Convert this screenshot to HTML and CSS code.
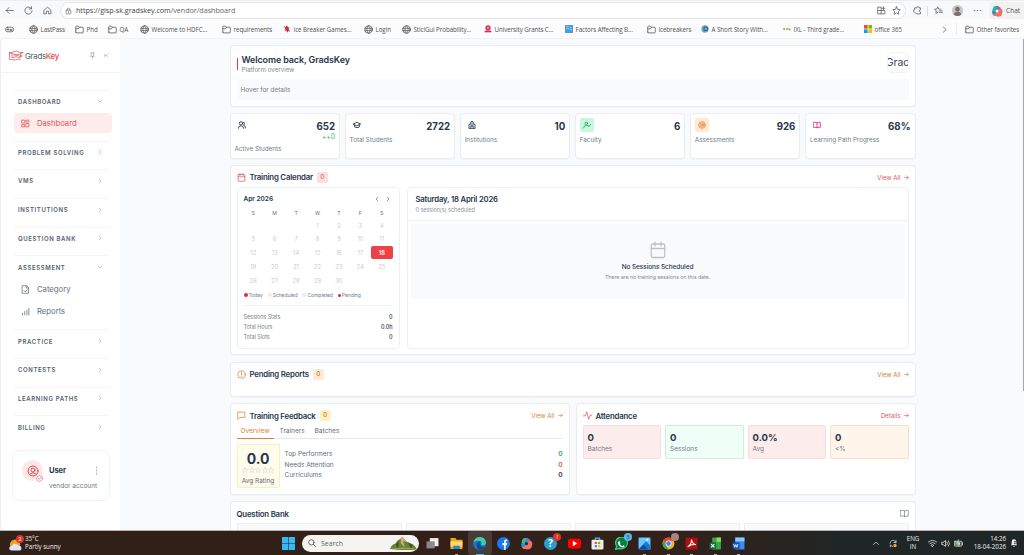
FILE: index.html
```html
<!DOCTYPE html>
<html lang="en">
<head>
  <meta charset="UTF-8">
  <meta name="viewport" content="width=device-width, initial-scale=1.0">
  <title>GradsKey Dashboard</title>
  <link rel="stylesheet" href="styles.css">
</head>
<body>
  <!-- Shared icons -->
  <svg class="sprite" width="0" height="0">
    <symbol id="i-globe" viewBox="0 0 24 24"><circle cx="12" cy="12" r="10"/><path d="M2 9h20M2 15h20M12 2c-6 6-6 14 0 20M12 2c6 6 6 14 0 20"/></symbol>
    <symbol id="i-folder" viewBox="0 0 24 24"><path d="M2 19V5q0-2 2-2h5l3 3h8q2 0 2 2v11q0 2-2 2H4q-2 0-2-2zM2 10h7l3-4"/></symbol>
    <symbol id="i-right" viewBox="0 0 24 24"><path d="m9 5 7 7-7 7"/></symbol>
    <symbol id="i-left" viewBox="0 0 24 24"><path d="m15 5-7 7 7 7"/></symbol>
    <symbol id="i-down" viewBox="0 0 24 24"><path d="m5 9 7 7 7-7"/></symbol>
    <symbol id="i-arrow" viewBox="0 0 24 24"><path d="M3 12h18M13 5l8 7-8 7"/></symbol>
    <symbol id="i-calendar" viewBox="0 0 24 24"><rect x="3" y="4" width="18" height="18" rx="2"/><path d="M8 1.5v5M16 1.5v5M3 10h18"/></symbol>
    <symbol id="i-book" viewBox="0 0 24 24"><path d="M12 6v15M2 4h7q3 0 3 3 0-3 3-3h7v15h-7q-3 0-3 2 0-2-3-2H2z"/></symbol>
    <symbol id="i-star" viewBox="0 0 24 24"><path d="m12 2 3 7 7 .7-5.200 5 1.500 7.300-6.300-3.700L5.700 22l1.500-7.300L2 9.700 9 9z"/></symbol>
  </svg>

  <div class="screen">
    <header class="toolbar">
      <svg class="ic nav-ic" viewBox="0 0 24 24"><path d="M22 12H3M11 4l-8 8 8 8"/></svg>
      <svg class="ic nav-ic" viewBox="0 0 24 24"><path d="M20 7a9.5 9.5 0 1 0 1.5 6M20 2v6h-6"/></svg>
      <svg class="ic nav-ic" viewBox="0 0 24 24"><path d="M3 11l9-8 9 8v10h-6v-7H9v7H3z"/></svg>
      <div class="address">
        <svg class="ic lock" viewBox="0 0 24 24"><rect x="4" y="9" width="16" height="13" rx="2"/><path d="M8 9V6a4 4 0 0 1 8 0v3M12 14v3"/></svg>
        <span class="url">https://gisp-sk.gradskey.com<i>/vendor/dashboard</i></span>
        <svg class="ic" viewBox="0 0 24 24"><path d="M3 3h8v18H3zM3 12h18v9H11M17 2v8M13 6h8"/></svg>
        <svg class="ic star"><use href="#i-star"/></svg>
      </div>
      <div class="tools">
        <svg class="ic" viewBox="0 0 24 24"><path d="M5 5h5a3 3 0 0 1 6 0h4v5a3 3 0 0 0 0 6v5H9l-5-5a3 3 0 0 1 0-6z"/></svg>
        <span class="vline"></span>
        <svg class="ic" viewBox="0 0 24 24"><path d="m10 3 2.500 5 6 .6M10 3 7.500 8l-6 .6 4.500 4.500L5 20l5-3M14 13h8M14 17h8"/></svg>
        <svg class="avatar" viewBox="0 0 24 24"><circle cx="12" cy="12" r="12" fill="#c9c7c6"/><circle cx="12" cy="9" r="5" fill="#77716f"/><path d="M3 20q3-6 9-6t9 6q-9 8-18 0" fill="#77716f"/></svg>
        <svg class="ic dots" viewBox="0 0 24 24"><path d="M3 12h2M11 12h2M19 12h2"/></svg>
        <div class="chat">
          <svg class="copilot" viewBox="0 0 24 24"><path d="M8 2h7l3 7-5 3-2 8H7q-5 0-5-7z" fill="#1b91e8"/><path d="M3 10q1-8 6-8h3L8 13z" fill="#35bd84"/><path d="M13 4h4q2 0 3 4 3 0 3 5l-2 7q-1 3-6 3h-4z" fill="#a05ae5"/><path d="M11 22H7q-3 0-4-4 6 2 8-4l3-6h6q3 2 2 7-2 7-7 7z" fill="#f4744b"/><circle cx="12" cy="12" r="3" fill="#fff"/></svg>
          <span>Chat</span>
        </div>
      </div>
    </header>

    <nav class="favorites">
      <svg class="ic pad" viewBox="0 0 24 16"><rect x="1" y="2" width="22" height="12" rx="6"/><path d="M5 8h6M14 8h5M8 6v4M14 11h4"/></svg>
      <a class="fav"><svg class="ic"><use href="#i-globe"/></svg>LastPass</a>
      <a class="fav"><svg class="ic"><use href="#i-folder"/></svg>Phd</a>
      <a class="fav"><svg class="ic"><use href="#i-folder"/></svg>QA</a>
      <a class="fav"><svg class="ic"><use href="#i-globe"/></svg>Welcome to HDFC...</a>
      <a class="fav"><svg class="ic"><use href="#i-folder"/></svg>requirements</a>
      <a class="fav"><svg class="fill-ic" viewBox="0 0 24 24"><path d="M3 3l5 3 4-5 3 6 5 1-3 4 5 9-6-4-2 6-5-7-4 4 2-8z" fill="#d92b3d"/></svg>Ice Breaker Games...</a>
      <a class="fav"><svg class="ic"><use href="#i-globe"/></svg>Login</a>
      <a class="fav"><svg class="ic"><use href="#i-globe"/></svg>SticiGui Probability...</a>
      <a class="fav"><svg class="fill-ic" viewBox="0 0 24 24"><circle cx="12" cy="9" r="8" fill="#d83b62"/><path d="M2 17h20v5H2z" fill="#bd355a"/><circle cx="12" cy="8" r="3" fill="#f6a2b2"/></svg>University Grants C...</a>
      <a class="fav"><svg class="fill-ic" viewBox="0 0 24 24"><path d="M0 0h24v24H0z" fill="#4d9cd8"/><path d="M4 5h7M4 11h9M15 7h6M15 14h6" stroke="#c6e5fa" stroke-width="2"/></svg>Factors Affecting B...</a>
      <a class="fav"><svg class="ic"><use href="#i-folder"/></svg>icebreakers</a>
      <a class="fav"><svg class="fill-ic" viewBox="0 0 24 24"><circle cx="12" cy="12" r="11" fill="#77a9c9"/><path d="M9 6h6a5 5 0 0 1 0 11H9z" fill="none" stroke="#1e5f88" stroke-width="3"/></svg>A Short Story With...</a>
      <a class="fav"><svg class="fill-ic" viewBox="0 0 24 24"><path d="M1 10h5v5H1z" fill="#66b344"/><path d="M9 9l6 6m0-6-6 6" stroke="#f4b400" stroke-width="3"/><path d="M18 9v5h5" fill="none" stroke="#3aa0d9" stroke-width="3"/></svg>IXL - Third grade...</a>
      <a class="fav"><svg class="fill-ic" viewBox="0 0 24 24"><path d="M0 0h11v11H0z" fill="#f25022"/><path d="M13 0h11v11H13z" fill="#7fba00"/><path d="M0 13h11v11H0z" fill="#00a4ef"/><path d="M13 13h11v11H13z" fill="#ffb900"/></svg>office 365</a>
      <svg class="ic more"><use href="#i-right"/></svg>
      <a class="fav other"><svg class="ic"><use href="#i-folder"/></svg>Other favorites</a>
    </nav>

    <div class="app">
      <aside class="sidebar">
        <div class="brand">
          <svg class="logo" viewBox="0 0 45 30"><path d="M3 7Q14 7 23 2q9 5 20 5-10 3-20 7Q13 9 3 7zM11 11v10q12-5 23 0V11M4 8v16M2 25q9 3 20 2 6-3 14-1M34 14q5-2 6 2-3 4-7 2M15 14q8-2 15 1"/></svg>
          <span class="brand-name">Grads<b>Key</b></span>
          <svg class="ic pin" viewBox="0 0 24 24"><path d="M7 3h10M8 3v9l-3 3h14l-3-3V3M12 15v7"/></svg>
          <svg class="ic collapse" viewBox="0 0 24 24"><path d="M4 4v16M20 4l-8 8 8 8M4 12h8"/></svg>
        </div>

        <div class="menu">
          <section class="group open">
            <h4>Dashboard <svg class="ic"><use href="#i-down"/></svg></h4>
            <a class="item active"><svg class="ic" viewBox="0 0 24 24"><path d="M3 3h7v8H3zM14 3h7v5h-7zM14 12h7v9h-7zM3 15h7v6H3z"/></svg>Dashboard</a>
          </section>
          <section class="group"><h4>Problem Solving <svg class="ic"><use href="#i-right"/></svg></h4></section>
          <section class="group"><h4>VMS <svg class="ic"><use href="#i-right"/></svg></h4></section>
          <section class="group"><h4>Institutions <svg class="ic"><use href="#i-right"/></svg></h4></section>
          <section class="group"><h4>Question Bank <svg class="ic"><use href="#i-right"/></svg></h4></section>
          <section class="group assessment">
            <h4>Assessment <svg class="ic"><use href="#i-down"/></svg></h4>
            <a class="item"><svg class="ic" viewBox="0 0 24 24"><path d="M4 2h11l5 5v15H4zM14 2v6h6M8 15l3 3 6-5"/></svg>Category</a>
            <a class="item"><svg class="ic" viewBox="0 0 24 24"><path d="M4 17v4M10 12v9M16 8v13M21 3v18"/></svg>Reports</a>
          </section>
          <section class="group"><h4>Practice <svg class="ic"><use href="#i-right"/></svg></h4></section>
          <section class="group"><h4>Contests <svg class="ic"><use href="#i-right"/></svg></h4></section>
          <section class="group"><h4>Learning Paths <svg class="ic"><use href="#i-right"/></svg></h4></section>
          <section class="group"><h4>Billing <svg class="ic"><use href="#i-right"/></svg></h4></section>
        </div>

        <div class="user-card">
          <div class="user-icon">
            <svg class="ic" viewBox="0 0 24 24"><circle cx="12" cy="12" r="10"/><circle cx="12" cy="10" r="4"/><path d="M5 19q7-7 14 0"/></svg>
            <svg class="ic status" viewBox="0 0 24 24"><circle cx="12" cy="12" r="10"/><path d="m8 12 3 3 5-6"/></svg>
          </div>
          <div class="user-text">
            <strong>User</strong>
            <span>vendor account</span>
          </div>
          <svg class="ic kebab" viewBox="0 0 24 24"><path d="M12 3v2M12 11v2M12 19v2"/></svg>
        </div>
      </aside>

      <main class="content">
        <section class="card welcome">
          <div class="welcome-head">
            <div class="welcome-title">
              <h1>Welcome back, GradsKey</h1>
              <p>Platform overview</p>
            </div>
            <div class="org-logo"><span>Grac</span></div>
          </div>
          <div class="hover-box">Hover for details</div>
        </section>

        <section class="stats">
          <div class="card stat first">
            <svg class="ic" viewBox="0 0 24 24"><circle cx="9" cy="7" r="5"/><path d="M1 22q0-8 8-8 7 0 8 8M16 3q5 1 3 7l-3 2q6 1 7 9"/></svg>
            <strong>652</strong><em>++0</em><span class="label">Active Students</span>
          </div>
          <div class="card stat">
            <svg class="ic" viewBox="0 0 24 24"><path d="m1 9 11-5 11 5-11 5zM5 12v6q7 4 14 0v-6"/></svg>
            <strong>2722</strong><span class="label">Total Students</span>
          </div>
          <div class="card stat">
            <svg class="ic" viewBox="0 0 24 24"><path d="M3 22V10h4V4l5-3 5 3v6h4v12zM8 22v-5h8v5M12 5v5M9 13h6"/></svg>
            <strong>10</strong><span class="label">Institutions</span>
          </div>
          <div class="card stat green">
            <svg class="ic" viewBox="0 0 24 24"><circle cx="10" cy="7" r="4"/><path d="M2 21q0-8 8-8 4 0 6 3M15 13l3 3 5-6"/></svg>
            <strong>6</strong><span class="label">Faculty</span>
          </div>
          <div class="card stat orange">
            <svg class="ic" viewBox="0 0 24 24"><circle cx="12" cy="12" r="10"/><circle cx="12" cy="12" r="6"/><circle cx="12" cy="12" r="2"/></svg>
            <strong>926</strong><span class="label">Assessments</span>
          </div>
          <div class="card stat pink">
            <svg class="ic"><use href="#i-book"/></svg>
            <strong>68%</strong><span class="label">Learning Path Progress</span>
          </div>
        </section>

        <section class="card training">
          <div class="card-head red">
            <svg class="ic"><use href="#i-calendar"/></svg>
            <h2>Training Calendar</h2><span class="badge">0</span>
            <a>View All <svg class="ic"><use href="#i-arrow"/></svg></a>
          </div>
          <div class="panels">
            <div class="panel month">
              <div class="month-head">
                <span>Apr 2026</span>
                <svg class="ic"><use href="#i-left"/></svg>
                <svg class="ic"><use href="#i-right"/></svg>
              </div>
              <div class="weekdays"><span>S</span><span>M</span><span>T</span><span>W</span><span>T</span><span>F</span><span>S</span></div>
              <div class="days" id="days"></div>
              <div class="legend">
                <span class="today">Today</span><span class="scheduled">Scheduled</span><span class="completed">Completed</span><span class="pending">Pending</span>
              </div>
              <dl class="totals">
                <div><dt>Sessions Stats</dt><dd>0</dd></div>
                <div><dt>Total Hours</dt><dd>0.0h</dd></div>
                <div><dt>Total Slots</dt><dd>0</dd></div>
              </dl>
            </div>
            <div class="panel schedule">
              <div class="schedule-head">
                <h3>Saturday, 18 April 2026</h3>
                <p>0 session(s) scheduled</p>
              </div>
              <div class="empty">
                <svg class="ic"><use href="#i-calendar"/></svg>
                <strong>No Sessions Scheduled</strong>
                <span>There are no training sessions on this date.</span>
              </div>
            </div>
          </div>
        </section>

        <section class="card reports">
          <div class="card-head orange">
            <svg class="ic" viewBox="0 0 24 24"><circle cx="12" cy="12" r="10"/><path d="M12 6v7M12 16v1"/></svg>
            <h2>Pending Reports</h2><span class="badge">0</span>
            <a>View All <svg class="ic"><use href="#i-arrow"/></svg></a>
          </div>
        </section>

        <div class="two-col">
          <section class="card feedback">
            <div class="card-head amber">
              <svg class="ic" viewBox="0 0 24 24"><path d="M3 3h18v14H8l-5 5z"/></svg>
              <h2>Training Feedback</h2><span class="badge">0</span>
              <a>View All <svg class="ic"><use href="#i-arrow"/></svg></a>
            </div>
            <div class="tabs"><span class="selected">Overview</span><span>Trainers</span><span>Batches</span></div>
            <div class="feedback-body">
              <div class="rating">
                <strong>0.0</strong>
                <div class="stars">
                  <svg class="ic"><use href="#i-star"/></svg>
                  <svg class="ic"><use href="#i-star"/></svg>
                  <svg class="ic"><use href="#i-star"/></svg>
                  <svg class="ic"><use href="#i-star"/></svg>
                  <svg class="ic"><use href="#i-star"/></svg>
                </div>
                <span class="avg">Avg Rating</span>
              </div>
              <dl class="scores">
                <div><dt>Top Performers</dt><dd class="good">0</dd></div>
                <div><dt>Needs Attention</dt><dd class="bad">0</dd></div>
                <div><dt>Curriculums</dt><dd>0</dd></div>
              </dl>
            </div>
          </section>

          <section class="card attendance">
            <div class="card-head red">
              <svg class="ic" viewBox="0 0 24 24"><path d="M1 13h5L10 2l5 20 4-11h4"/></svg>
              <h2>Attendance</h2>
              <a>Details <svg class="ic"><use href="#i-arrow"/></svg></a>
            </div>
            <div class="tiles">
              <div class="tile rose"><strong>0</strong><span>Batches</span></div>
              <div class="tile mint"><strong>0</strong><span>Sessions</span></div>
              <div class="tile rose"><strong>0.0%</strong><span>Avg</span></div>
              <div class="tile peach"><strong>0</strong><span>&lt;%</span></div>
            </div>
          </section>
        </div>

        <section class="card questions">
          <div class="card-head">
            <h2>Question Bank</h2>
            <svg class="ic book"><use href="#i-book"/></svg>
          </div>
          <div class="question-cards"><div></div><div></div><div></div><div></div></div>
        </section>
      </main>
      <div class="scrollbar"></div>
    </div>

    <footer class="taskbar">
      <div class="weather">
        <div class="weather-icon">
          <svg viewBox="0 0 30 30"><circle cx="13" cy="14" r="11" fill="#f6a024"/><path d="M5 27a5 5 0 0 1 1-10 8 8 0 0 1 14-1 6 6 0 0 1 4 11z" fill="#dce6fa"/></svg>
          <span class="count">2</span>
        </div>
        <div class="weather-text"><span>35°C</span><span>Partly sunny</span></div>
      </div>

      <div class="apps">
        <svg class="app start" viewBox="0 0 24 24"><path d="M0 0h11.500v11.500H0zM12.500 0H24v11.500H12.500zM0 12.500h11.500V24H0zM12.500 12.500H24V24H12.500z" fill="#35b8f3"/></svg>
        <div class="search">
          <svg class="ic" viewBox="0 0 24 24"><circle cx="10" cy="10" r="8"/><path d="m16 16 7 7"/></svg>
          <span>Search</span>
          <svg class="hill" viewBox="0 0 54 28"><path d="M0 26q4-10 10-10 4-8 10-10l5-4 8 9 9 4q8 3 12 12-28 3-54-1z" fill="#6d8035"/><path d="m21 5 4-4 8 11-7-2 4 13-8-8z" fill="#c1b583"/><path d="m11 17 7-6-2 14M36 13l6 12 4-7" fill="#3d5026"/><path d="M2 26q25-5 50 0z" fill="#9cab52"/></svg>
        </div>
        <div class="app"><svg viewBox="0 0 24 24"><path d="M7 2h16v15H7z" fill="#eee"/><path d="M1 8h15v13H1z" fill="#898989"/></svg></div>
        <div class="app run"><svg viewBox="0 0 24 24"><path d="M1 2h9l2 3h11v17H1z" fill="#e9a824"/><path d="M1 8h22v10H1z" fill="#ffd867"/><path d="M6 16h12v6H6z" fill="#2588d6"/></svg></div>
        <div class="app current"><svg viewBox="0 0 24 24"><circle cx="12" cy="12" r="12" fill="#1878c8"/><path d="M1 9Q4 0 13 0q10 1 11 10-1 7-9 5 3-7-4-8-6 0-10 2z" fill="#41cf9d"/><path d="M7 14q0-6 7-6-4 9 8 11-5 5-11 4-5-3-4-9z" fill="#0b4d91"/></svg></div>
        <div class="app"><svg viewBox="0 0 24 24"><circle cx="12" cy="12" r="12" fill="#1877f2"/><path d="M13 24v-9h-3v-4h3V8q0-4 6-3v3q-3-1-3 1v2h3l-1 4h-2v9z" fill="#fff"/></svg></div>
        <div class="app"><svg viewBox="0 0 24 24"><path d="M8 2h7l3 7-5 3-2 8H7q-5 0-5-7z" fill="#1b91e8"/><path d="M3 10q1-8 6-8h3L8 13z" fill="#35bd84"/><path d="M13 4h4q2 0 3 4 3 0 3 5l-2 7q-1 3-6 3h-4z" fill="#a05ae5"/><path d="M11 22H7q-3 0-4-4 6 2 8-4l3-6h6q3 2 2 7-2 7-7 7z" fill="#f4744b"/><circle cx="12" cy="12" r="3" fill="#35252a"/></svg></div>
        <div class="app help"><b>?</b><span class="count">!</span></div>
        <div class="app"><svg viewBox="0 0 24 24"><rect y="3" width="24" height="18" rx="5" fill="#f00"/><path d="m9 7 8 5-8 5z" fill="#fff"/></svg></div>
        <div class="app"><svg viewBox="0 0 24 24"><path d="M8 5V2h8v3" fill="none" stroke="#55b8ed" stroke-width="2"/><rect x="1" y="5" width="22" height="18" rx="2" fill="#eee"/><path d="M7 9h4v4H7z" fill="#f25022"/><path d="M13 9h4v4h-4z" fill="#7fba00"/><path d="M7 15h4v4H7z" fill="#00a4ef"/><path d="M13 15h4v4h-4z" fill="#ffb900"/></svg></div>
        <div class="app"><svg viewBox="0 0 24 24"><path d="m1 23 2-6a11 11 0 1 1 5 4z" fill="#087c43" stroke="#41da80" stroke-width="2"/><path d="m8 7 2 4-1 2 4 4 2-2 3 2q-2 3-5 2-7-2-8-9z" fill="#fff"/></svg><span class="count blue">3</span></div>
        <div class="app run"><svg viewBox="0 0 24 24"><rect x="1" y="1" width="22" height="22" rx="2" fill="#69c6ff"/><path d="m1 23 14-15 8 8v7z" fill="#1679cc"/><path d="m1 23 9-9 9 9z" fill="#134c98"/><circle cx="17" cy="5" r="2" fill="#fff"/></svg></div>
        <div class="app run"><svg viewBox="0 0 24 24"><circle cx="12" cy="12" r="11" fill="#eab52c"/><path d="M2 7Q6 1 12 1q7 0 10 6H12L8 16z" fill="#e14337"/><path d="m2 7 6 9 4 7Q2 23 1 12z" fill="#37a853"/><circle cx="12" cy="12" r="5" fill="#3f83ed" stroke="#fff" stroke-width="1.500"/></svg><span class="count brown"></span></div>
        <div class="app run"><svg viewBox="0 0 24 24"><path d="M1 1h22v22H1z" fill="#b60b10"/><path d="M5 18q7-4 7-13 2 9 8 9-8-1-15 4z" fill="none" stroke="#fff" stroke-width="2"/></svg></div>
        <div class="app run"><svg viewBox="0 0 24 24"><path d="M6 1h16v22H6z" fill="#35a84e"/><path d="M14 1h8v8h-8z" fill="#91d65c"/><path d="M1 10h12v12H1z" fill="#126c39"/><path d="m4 13 6 6m0-6-6 6" stroke="#fff" stroke-width="2"/></svg></div>
        <div class="app run"><svg viewBox="0 0 24 24"><path d="M6 1h17v22H6z" fill="#3b8cee"/><path d="M6 1h17v7H6z" fill="#86cbfa"/><path d="M1 10h13v12H1z" fill="#174fbd"/><path d="m3 13 2 6 2-5 2 5 2-6" fill="none" stroke="#fff" stroke-width="1.500"/></svg></div>
      </div>

      <div class="tray">
        <svg class="ic" viewBox="0 0 24 24"><path d="m4 15 8-7 8 7"/></svg>
        <div class="sync"><svg class="ic" viewBox="0 0 24 24"><path d="M3 11a9 9 0 0 1 16-5l2 3M21 3v6h-6M11 21a9 9 0 0 1-7-5v6"/><circle class="sync-dot" cx="18" cy="18" r="5"/></svg></div>
        <div class="lang"><span>ENG</span><span>IN</span></div>
        <svg class="ic" viewBox="0 0 24 24"><path d="M1 8q11-9 22 0M5 12q7-6 14 0M9 16q3-3 6 0l-3 4z"/></svg>
        <svg class="ic" viewBox="0 0 24 24"><path d="M2 9v6h4l6 5V4L6 9zM16 8q3 4 0 8M20 5q5 7 0 14"/></svg>
        <svg class="ic battery" viewBox="0 0 24 24"><rect x="1" y="6" width="20" height="13" rx="2"/><path class="level" d="M3 8h14v9H3z"/><path d="M23 10v5M12 2l-3 9h6l-3 8"/></svg>
        <div class="clock"><span>14:26</span><span>18-04-2026</span></div>
        <svg class="bell" viewBox="0 0 24 24"><path d="M3 19l2-4V8a7 7 0 0 1 14 0v7l2 4zM9 21h6l-3 3z"/><path class="zzz" d="M12 7h6l-6 7h6"/></svg>
      </div>
    </footer>
  </div>

  <script>
    // April 2026 starts on a Wednesday
    const days = document.getElementById("days");
    for (let i = 0; i < 3; i++) {
      days.appendChild(document.createElement("span"));
    }
    for (let day = 1; day <= 30; day++) {
      const cell = document.createElement("span");
      cell.innerText = day;
      if (day === 18) {
        cell.classList.add("selected-day");
      }
      days.appendChild(cell);
    }
  </script>
</body>
</html>
```

FILE: styles.css
```css
* {
  box-sizing: border-box;
}

body {
  margin: 0;
  font-family: Inter, "Open Sans", sans-serif;
  color: #27364a;
  overflow: hidden;
}

h1, h2, h3, h4, p, dl, dd {
  margin: 0;
}

.sprite {
  display: block;
}

.ic {
  width: 9px;
  height: 9px;
  flex: none;
  fill: none;
  stroke: currentColor;
  stroke-width: 2;
  stroke-linecap: round;
  stroke-linejoin: round;
}

.screen {
  width: 1024px;
  height: 555px;
  display: flex;
  flex-direction: column;
  background: #f9fafb;
}

/* Browser bars */
.toolbar {
  height: 19px;
  display: flex;
  align-items: center;
  padding: 2px 0 1px 5px;
  background: #f8f9fa;
  border-top: 1px solid #eee;
  font-family: "Open Sans", sans-serif;
  color: #555;
}

.nav-ic {
  margin-right: 10px;
}

.address {
  width: 846px;
  height: 17px;
  display: flex;
  align-items: center;
  padding: 0 4px;
  border: 1px solid #e3e4e5;
  border-radius: 9px;
  background: #fff;
}

.nav-ic + .address {
  margin-left: -2px;
}

.lock {
  width: 7px;
  height: 8px;
  margin-right: 4px;
}

.url {
  flex: 1;
  margin-top: -2px;
  font-size: 7.2px;
  letter-spacing: -0.04px;
  color: #444;
}

.url i {
  font-style: normal;
  color: #666;
}

.star {
  margin-left: 6px;
}

.tools {
  flex: 1;
  display: flex;
  align-items: center;
  padding-left: 7px;
}

.vline {
  height: 10px;
  margin: 0 6px 0 5px;
  border-left: 1px solid #ddd;
}

.avatar {
  width: 11px;
  height: 11px;
  margin: 0 10px 0 9px;
}

.chat {
  flex: 1;
  height: 17px;
  display: flex;
  align-items: center;
  gap: 3px;
  margin-left: 7px;
  padding-left: 2px;
  border-radius: 4px 0 0 4px;
  background: #f1f1f1;
  font-size: 6.6px;
}

.copilot {
  width: 12px;
  height: 12px;
}

.favorites {
  height: 19px;
  display: grid;
  grid-template-columns: 24px 46px 33px 32px 82px 61px 81px 38px 82px 81px 82px 54px 82px 81px 76px 24px 60px;
  align-items: center;
  padding: 1px 0 0 4.5px;
  background: #fcfcfd;
  font-family: "Open Sans", sans-serif;
  font-size: 6.2px;
  letter-spacing: -0.06px;
  color: #505050;
  white-space: nowrap;
}

.pad {
  width: 9px;
  height: 7px;
}

.fav {
  display: flex;
  align-items: center;
  gap: 3px;
}

.fill-ic {
  width: 8px;
  height: 8px;
  flex: none;
}

.other {
  height: 12px;
  margin-left: -8px;
  padding-left: 8px;
  border-left: 1px solid #eee;
}

/* App shell */
.app {
  position: relative;
}

.screen > .app {
  height: 492px;
  display: flex;
  overflow: hidden;
  border-radius: 5px 0 0 5px;
  border-top: 1px solid #f0f1f3;
  border-left: 1px solid #eceef0;
  background: #f8fafc;
}

.sidebar {
  width: 119px;
  background: #fff;
}

.brand {
  height: 34px;
  display: flex;
  align-items: center;
  padding-left: 7px;
  border-bottom: 1px solid #f1f3f5;
}

.logo {
  width: 16px;
  height: 11px;
  fill: none;
  stroke: #d9484d;
  stroke-width: 2;
}

.brand-name {
  width: 64px;
  margin-left: 1px;
  font-size: 7.8px;
  letter-spacing: -0.25px;
  color: #4f5a69;
}

.brand-name b {
  font-weight: 500;
  color: #e34b4e;
}

.pin, .collapse {
  width: 7px;
  height: 7px;
  color: #8a94a2;
}

.collapse {
  width: 5px;
  margin-left: 8px;
}

.menu {
  padding: 16.5px 11px 0 13px;
}

.group {
  height: 28.7px;
  border-top: 1px solid #f5f5f6;
}

.open {
  height: 51px;
}

.assessment {
  height: 74px;
}

.group h4 {
  height: 21.5px;
  display: flex;
  align-items: center;
  justify-content: space-between;
  padding: 0 6px 0 4px;
  font-size: 6px;
  font-weight: 600;
  letter-spacing: 0.62px;
  text-transform: uppercase;
  color: #556070;
}

.group h4 .ic {
  width: 6px;
  height: 6px;
  color: #8b95a3;
}

.item {
  height: 22.7px;
  display: flex;
  align-items: center;
  gap: 7px;
  margin-right: -3px;
  padding-left: 7px;
  font-size: 7.7px;
  color: #626d7c;
}

.item.active {
  height: 20px;
  margin-top: 1px;
  border-radius: 4px;
  background: #feecec;
  color: #e05255;
}

.user-card {
  width: 98px;
  height: 51px;
  display: flex;
  align-items: flex-start;
  margin: 6px 0 0 11px;
  padding: 9px 9px;
  border: 1px solid #f1f3f5;
  border-radius: 8px;
}

.user-icon {
  position: relative;
  width: 21px;
  height: 21px;
  flex: none;
  display: flex;
  align-items: center;
  justify-content: center;
  border-radius: 50%;
  background: #fde7e7;
  color: #dd5055;
}

.user-icon .ic {
  width: 12px;
  height: 12px;
}

.user-icon .status {
  position: absolute;
  right: 0;
  bottom: -1px;
  width: 7px;
  height: 7px;
  border-radius: 50%;
  background: #fff;
}

.user-text {
  width: 43px;
  display: flex;
  flex-direction: column;
  margin-left: 6px;
  white-space: nowrap;
}

.user-text strong {
  font-size: 7.6px;
  line-height: 21px;
  letter-spacing: -0.1px;
}

.user-text span {
  font-size: 6.5px;
  line-height: 11px;
  color: #6c7684;
}

.kebab {
  margin-top: 6px;
  color: #7e8794;
}

.scrollbar {
  width: 1px;
  height: 352px;
  margin-left: auto;
  background: #a5a8ab;
}

/* Dashboard */
.content {
  width: 686px;
  margin-left: 109.5px;
  padding-top: 6px;
}

.card {
  border: 1px solid #e9edf2;
  border-radius: 4px;
  background: #fff;
  box-shadow: 0 1px 1px rgba(30, 50, 70, 0.03);
}

.welcome {
  height: 62px;
  padding: 6px 6px 6px;
}

.welcome-head {
  height: 27px;
  display: flex;
  justify-content: space-between;
}

.welcome-title {
  height: 12px;
  margin-top: 6px;
  padding-left: 4px;
  border-left: 1px solid #dc3f44;
}

.welcome-title h1 {
  margin-top: -4px;
  font-size: 9px;
  line-height: 11px;
  font-weight: 600;
  letter-spacing: -0.14px;
}

.welcome-title p {
  font-size: 6.2px;
  line-height: 9px;
  color: #7e8895;
}

.org-logo {
  width: 22px;
  height: 21px;
  display: flex;
  align-items: center;
  justify-content: center;
  overflow: hidden;
  border: 1px solid #eef1f4;
  border-radius: 5px;
  font-size: 10.5px;
  color: #40464d;
}

.hover-box {
  height: 21px;
  padding-left: 4px;
  background: #f8fafc;
  font-size: 6.4px;
  line-height: 22px;
  color: #717b89;
}

.stats {
  display: grid;
  grid-template-columns: repeat(6, 1fr);
  gap: 4.5px;
  margin-top: 6px;
}

.stat {
  height: 46px;
  display: grid;
  grid-template-columns: 14px 1fr;
  grid-template-rows: 14px 12px;
  align-content: start;
  row-gap: 3px;
  padding: 4px 4px;
}

.stat .ic {
  width: 14px;
  height: 14px;
  padding: 3px;
  border-radius: 2px;
  stroke-width: 2.6;
}

.stat strong {
  font-size: 9.7px;
  line-height: 17px;
  text-align: right;
}

.stat em {
  grid-column: 1 / 3;
  margin-top: -2px;
  font-size: 7px;
  font-style: normal;
  line-height: 10px;
  text-align: right;
  letter-spacing: -0.1px;
  color: #43b95c;
}

.stat .label {
  grid-column: 1 / 3;
  font-size: 6.3px;
  line-height: 11px;
  color: #717b8a;
  white-space: nowrap;
}

.first {
  grid-template-rows: 14px 8px 12px;
  row-gap: 2px;
}

.green .ic {
  background: #c9f7dc;
  color: #23a46c;
}

.stat.orange .ic {
  background: #ffead1;
  color: #e88b4b;
}

.pink .ic {
  color: #d73578;
}

.training {
  height: 190px;
  margin-top: 5.5px;
  padding: 0 6px;
}

.card-head {
  height: 21px;
  display: flex;
  align-items: center;
  padding-top: 2px;
}

.card-head h2 {
  margin-left: 4px;
  font-size: 7.8px;
  font-weight: 600;
  letter-spacing: -0.2px;
}

.badge {
  height: 11px;
  margin-left: 4px;
  padding: 0 3.5px;
  border-radius: 2px;
  font-size: 6.5px;
  line-height: 11px;
}

.card-head a {
  display: flex;
  align-items: center;
  gap: 3px;
  margin-left: auto;
  font-size: 6.2px;
}

.card-head a .ic {
  width: 5px;
  height: 5px;
  stroke-width: 3;
}

.red .ic, .red a {
  color: #df5a5e;
}

.red .badge {
  background: #fedddd;
  color: #e35b5b;
}

.card-head.orange .ic, .card-head.orange a {
  color: #dd7b3e;
}

.card-head.orange .badge {
  background: #ffebd5;
  color: #b7632f;
}

.amber .ic, .amber a {
  color: #d98532;
}

.amber .badge {
  background: #fff0bf;
  color: #a76d25;
}

.panels {
  display: flex;
  gap: 7px;
}

.panel {
  height: 162px;
  border: 1px solid #edf0f3;
  border-radius: 4px;
}

.month {
  width: 163px;
  padding: 5px 6px 0 5px;
}

.month-head {
  height: 13px;
  display: flex;
  align-items: center;
  gap: 5px;
  padding: 0 2px 0 1px;
  font-size: 6.5px;
  font-weight: 600;
}

.month-head span {
  flex: 1;
}

.month-head .ic {
  width: 6px;
  height: 6px;
}

.weekdays, .days {
  display: grid;
  grid-template-columns: repeat(7, 1fr);
  text-align: center;
  font-size: 5.2px;
  line-height: 14px;
  color: #656f7d;
}

.weekdays {
  height: 13px;
}

.days {
  grid-auto-rows: 13.9px;
  line-height: 13px;
  font-size: 5.7px;
  color: #c8ccd1;
}

.days .selected-day {
  height: 13px;
  border-radius: 2px;
  background: #ee4145;
  font-weight: 600;
  color: #fff;
}

.legend {
  height: 15px;
  display: flex;
  align-items: center;
  gap: 5px;
  margin-bottom: 2px;
  padding-left: 1px;
  font-size: 5.1px;
  letter-spacing: -0.1px;
  color: #737d8a;
}

.legend span {
  display: flex;
  align-items: center;
  gap: 1px;
}

.legend span::before {
  content: "";
  width: 4px;
  height: 4px;
  border-radius: 50%;
}

.legend .today::before {
  background: #d93038;
}

.legend .scheduled::before {
  background: #fde4e4;
}

.legend .completed::before {
  background: #daf7ed;
}

.legend .pending::before {
  width: 3px;
  height: 3px;
  background: #c62c37;
}

.totals {
  padding-top: 6px;
  border-top: 1px solid #edf0f3;
}

.totals div, .scores div {
  display: flex;
  justify-content: space-between;
}

.totals div {
  padding-left: 1px;
  font-size: 5.5px;
  line-height: 10.2px;
  letter-spacing: -0.08px;
  color: #7b8491;
}

.totals dd {
  font-weight: 500;
  color: #27364a;
}

.schedule {
  flex: 1;
}

.schedule-head {
  height: 33px;
  padding: 6px 8px 0;
  border-bottom: 1px solid #edf0f3;
}

.schedule-head h3 {
  font-size: 7.7px;
  line-height: 12px;
  font-weight: 600;
  letter-spacing: -0.18px;
}

.schedule-head p {
  font-size: 5.5px;
  line-height: 8px;
  letter-spacing: -0.05px;
  color: #8d95a0;
}

.empty {
  height: 75px;
  display: flex;
  flex-direction: column;
  align-items: center;
  margin: 3px 3px 0;
  padding-top: 17px;
  background: #f8fafc;
}

.empty .ic {
  width: 18px;
  height: 18px;
  color: #bbc1ca;
  stroke-width: 1.7;
}

.empty strong {
  margin-top: 2px;
  font-size: 6.5px;
  line-height: 12px;
  font-weight: 500;
  letter-spacing: -0.08px;
}

.empty span {
  font-size: 5.4px;
  line-height: 9px;
  letter-spacing: -0.1px;
  color: #848d99;
}

.reports {
  height: 35px;
  margin-top: 7px;
  padding: 0 6px;
}

.two-col {
  display: grid;
  grid-template-columns: 1fr 1fr;
  gap: 6px;
  margin-top: 6.5px;
}

.two-col .card {
  height: 92px;
  padding: 0 6px;
}

.tabs {
  height: 14px;
  display: flex;
  gap: 2px;
  border-bottom: 1px solid #e5e9ed;
  font-size: 6.5px;
  line-height: 13px;
  color: #606b7b;
}

.tabs span {
  height: 14px;
  padding: 0 4px;
}

.tabs .selected {
  border-bottom: 1px solid #dd7f34;
  color: #d98032;
}

.feedback-body {
  display: flex;
  padding-top: 5px;
}

.rating {
  width: 43px;
  height: 44px;
  display: flex;
  flex-direction: column;
  align-items: center;
  border: 1px solid #f8efbd;
  border-radius: 2px;
  background: #fffceb;
}

.rating strong {
  margin-top: 5px;
  font-size: 14px;
  line-height: 17px;
}

.stars {
  display: flex;
  gap: 0.5px;
}

.stars .ic {
  width: 6px;
  height: 6px;
  color: #cfd1cf;
}

.avg {
  margin-top: 3px;
  font-size: 6.5px;
  line-height: 10px;
  color: #606a78;
}

.scores {
  flex: 1;
  padding: 5px 0 0 5px;
}

.scores div {
  font-size: 6.5px;
  line-height: 10.7px;
  color: #606b7b;
}

.scores dd {
  font-weight: 600;
  color: #27364a;
}

.scores .good {
  color: #28a261;
}

.scores .bad {
  color: #d9532d;
}

.tiles {
  display: grid;
  grid-template-columns: repeat(4, 1fr);
  gap: 4px;
}

.tile {
  height: 34px;
  display: flex;
  flex-direction: column;
  padding: 6px 4px 0;
  border: 1px solid #f7dddd;
  border-radius: 2px;
}

.tile strong {
  font-size: 9.5px;
  line-height: 12px;
}

.tile span {
  font-size: 6.5px;
  line-height: 11px;
  color: #717b89;
}

.rose {
  background: #fdecec;
}

.mint {
  border-color: #ccefdc;
  background: #effef6;
}

.peach {
  border-color: #f8dfc1;
  background: #fff5ea;
}

.questions {
  height: 60px;
  margin-top: 6px;
  padding: 0 6px;
}

.questions h2 {
  margin-left: 0;
}

.book {
  margin-left: auto;
  color: #788390;
}

.question-cards {
  display: grid;
  grid-template-columns: repeat(4, 1fr);
  gap: 4px;
}

.question-cards div {
  height: 30px;
  border: 1px solid #edf0f3;
  background: #f9fafb;
}

/* Taskbar */
.taskbar {
  height: 25px;
  position: relative;
  display: flex;
  align-items: center;
  border-top: 1px solid #b8b4b1;
  background: linear-gradient(90deg, #302018 0%, #332018 55%, #30211b 68%, #202625 82%, #202625 100%);
  color: #eee;
  font-family: "Open Sans", sans-serif;
  font-size: 6.2px;
}

.weather {
  width: 272px;
  display: flex;
  align-items: center;
  padding-left: 9px;
}

.weather-icon {
  position: relative;
  width: 14px;
  height: 17px;
  padding-top: 3px;
}

.weather-icon svg {
  width: 14px;
  height: 14px;
}

.count {
  position: absolute;
  top: -3px;
  right: -4px;
  width: 8px;
  height: 8px;
  border-radius: 50%;
  background: #d93325;
  font-size: 6px;
  line-height: 8px;
  text-align: center;
  color: #fff;
}

.weather-icon .count {
  top: 0;
  right: -1px;
}

.weather-text, .lang, .clock {
  display: flex;
  flex-direction: column;
  line-height: 8.5px;
}

.weather-text {
  margin-left: 2px;
}

.apps {
  display: flex;
  align-items: center;
  padding-left: 10px;
}

.start {
  width: 13px;
  height: 13px;
  margin-right: 7px;
}

.search {
  width: 117px;
  height: 17px;
  display: flex;
  align-items: center;
  padding: 0 2px 0 6px;
  border-radius: 9px;
  background: #f5f3f1;
  color: #666;
  font-size: 7px;
}

.search .ic {
  width: 8px;
  height: 8px;
  color: #333;
}

.search span {
  flex: 1;
  margin-left: 5px;
}

.hill {
  width: 27px;
  height: 14px;
}

.apps > div.app {
  width: 23.55px;
  height: 24px;
  display: flex;
  align-items: center;
  justify-content: center;
}

.apps > .search + .app {
  margin-left: 2px;
}

.app > svg {
  width: 13px;
  height: 13px;
}

.apps .current {
  border-radius: 3px;
  background: #493b35;
}

.run::after, .current::after {
  content: "";
  position: absolute;
  bottom: 0;
  width: 3px;
  height: 1px;
  background: #b3aaa5;
}

.current::after {
  width: 8px;
  background: #4db8ee;
}

.apps .count {
  top: 2px;
  right: 1px;
}

.apps .blue {
  background: #55bce9;
  color: #173a4d;
}

.apps .brown {
  background: #a7837a;
}

.help b {
  width: 13px;
  height: 13px;
  border-radius: 50%;
  background: #299ed1;
  font-size: 10px;
  line-height: 13px;
  text-align: center;
  color: #fff;
}

.tray {
  display: flex;
  align-items: center;
  margin-left: auto;
  padding-right: 6px;
}

.tray .ic {
  margin-right: 4px;
}

.tray .ic:first-child {
  width: 8px;
}

.tray > .ic:first-child {
  margin-right: 9px;
}

.sync {
  display: flex;
  margin-right: 5px;
}

.sync-dot {
  fill: #f5a524;
  stroke: none;
}

.lang {
  width: 14px;
  align-items: center;
  margin-right: 8px;
}

.level {
  fill: #76bb75;
  stroke: none;
}

.clock {
  width: 37px;
  align-items: flex-end;
  margin-left: 2px;
}

.bell {
  width: 8px;
  height: 10px;
  margin-left: 4px;
  fill: #eee;
}

.zzz {
  fill: none;
  stroke: #222;
  stroke-width: 2;
}
```
